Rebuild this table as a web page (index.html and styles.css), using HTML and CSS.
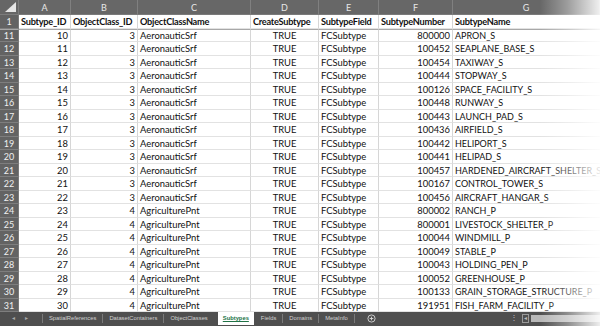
FILE: index.html
```html
<!DOCTYPE html>
<html>
<head>
<meta charset="utf-8">
<link rel="stylesheet" href="styles.css">
</head>
<body>
<div class="window">
  <div class="sheet">
    <div class="corner"><span class="tri"></span></div>
    <div class="colh">A</div><div class="colh">B</div><div class="colh">C</div><div class="colh">D</div><div class="colh">E</div><div class="colh">F</div><div class="colh">G</div>

    <div class="rowh">1</div><div class="c b">Subtype_ID</div><div class="c b">ObjectClass_ID</div><div class="c b">ObjectClassName</div><div class="c b">CreateSubtype</div><div class="c b">SubtypeField</div><div class="c b">SubtypeNumber</div><div class="c b last">SubtypeName</div>

    <div class="rowh fz">11</div><div class="c r fz">10</div><div class="c r fz">3</div><div class="c fz">AeronauticSrf</div><div class="c ctr fz">TRUE</div><div class="c fz">FCSubtype</div><div class="c r fz">800000</div><div class="c last fz">APRON_S</div>
    <div class="rowh">12</div><div class="c r">11</div><div class="c r">3</div><div class="c">AeronauticSrf</div><div class="c ctr">TRUE</div><div class="c">FCSubtype</div><div class="c r">100452</div><div class="c last">SEAPLANE_BASE_S</div>
    <div class="rowh">13</div><div class="c r">12</div><div class="c r">3</div><div class="c">AeronauticSrf</div><div class="c ctr">TRUE</div><div class="c">FCSubtype</div><div class="c r">100454</div><div class="c last">TAXIWAY_S</div>
    <div class="rowh">14</div><div class="c r">13</div><div class="c r">3</div><div class="c">AeronauticSrf</div><div class="c ctr">TRUE</div><div class="c">FCSubtype</div><div class="c r">100444</div><div class="c last">STOPWAY_S</div>
    <div class="rowh">15</div><div class="c r">14</div><div class="c r">3</div><div class="c">AeronauticSrf</div><div class="c ctr">TRUE</div><div class="c">FCSubtype</div><div class="c r">100126</div><div class="c last">SPACE_FACILITY_S</div>
    <div class="rowh">16</div><div class="c r">15</div><div class="c r">3</div><div class="c">AeronauticSrf</div><div class="c ctr">TRUE</div><div class="c">FCSubtype</div><div class="c r">100448</div><div class="c last">RUNWAY_S</div>
    <div class="rowh">17</div><div class="c r">16</div><div class="c r">3</div><div class="c">AeronauticSrf</div><div class="c ctr">TRUE</div><div class="c">FCSubtype</div><div class="c r">100443</div><div class="c last">LAUNCH_PAD_S</div>
    <div class="rowh">18</div><div class="c r">17</div><div class="c r">3</div><div class="c">AeronauticSrf</div><div class="c ctr">TRUE</div><div class="c">FCSubtype</div><div class="c r">100436</div><div class="c last">AIRFIELD_S</div>
    <div class="rowh">19</div><div class="c r">18</div><div class="c r">3</div><div class="c">AeronauticSrf</div><div class="c ctr">TRUE</div><div class="c">FCSubtype</div><div class="c r">100442</div><div class="c last">HELIPORT_S</div>
    <div class="rowh">20</div><div class="c r">19</div><div class="c r">3</div><div class="c">AeronauticSrf</div><div class="c ctr">TRUE</div><div class="c">FCSubtype</div><div class="c r">100441</div><div class="c last">HELIPAD_S</div>
    <div class="rowh">21</div><div class="c r">20</div><div class="c r">3</div><div class="c">AeronauticSrf</div><div class="c ctr">TRUE</div><div class="c">FCSubtype</div><div class="c r">100457</div><div class="c last">HARDENED_AIRCRAFT_SHELTER_S</div>
    <div class="rowh">22</div><div class="c r">21</div><div class="c r">3</div><div class="c">AeronauticSrf</div><div class="c ctr">TRUE</div><div class="c">FCSubtype</div><div class="c r">100167</div><div class="c last">CONTROL_TOWER_S</div>
    <div class="rowh">23</div><div class="c r">22</div><div class="c r">3</div><div class="c">AeronauticSrf</div><div class="c ctr">TRUE</div><div class="c">FCSubtype</div><div class="c r">100456</div><div class="c last">AIRCRAFT_HANGAR_S</div>
    <div class="rowh">24</div><div class="c r">23</div><div class="c r">4</div><div class="c">AgriculturePnt</div><div class="c ctr">TRUE</div><div class="c">FCSubtype</div><div class="c r">800002</div><div class="c last">RANCH_P</div>
    <div class="rowh">25</div><div class="c r">24</div><div class="c r">4</div><div class="c">AgriculturePnt</div><div class="c ctr">TRUE</div><div class="c">FCSubtype</div><div class="c r">800001</div><div class="c last">LIVESTOCK_SHELTER_P</div>
    <div class="rowh">26</div><div class="c r">25</div><div class="c r">4</div><div class="c">AgriculturePnt</div><div class="c ctr">TRUE</div><div class="c">FCSubtype</div><div class="c r">100044</div><div class="c last">WINDMILL_P</div>
    <div class="rowh">27</div><div class="c r">26</div><div class="c r">4</div><div class="c">AgriculturePnt</div><div class="c ctr">TRUE</div><div class="c">FCSubtype</div><div class="c r">100049</div><div class="c last">STABLE_P</div>
    <div class="rowh">28</div><div class="c r">27</div><div class="c r">4</div><div class="c">AgriculturePnt</div><div class="c ctr">TRUE</div><div class="c">FCSubtype</div><div class="c r">100043</div><div class="c last">HOLDING_PEN_P</div>
    <div class="rowh">29</div><div class="c r">28</div><div class="c r">4</div><div class="c">AgriculturePnt</div><div class="c ctr">TRUE</div><div class="c">FCSubtype</div><div class="c r">100052</div><div class="c last">GREENHOUSE_P</div>
    <div class="rowh">30</div><div class="c r">29</div><div class="c r">4</div><div class="c">AgriculturePnt</div><div class="c ctr">TRUE</div><div class="c">FCSubtype</div><div class="c r">100133</div><div class="c last">GRAIN_STORAGE_STRUCTURE_P</div>
    <div class="rowh">31</div><div class="c r">30</div><div class="c r">4</div><div class="c">AgriculturePnt</div><div class="c ctr">TRUE</div><div class="c">FCSubtype</div><div class="c r">191951</div><div class="c last">FISH_FARM_FACILITY_P</div>
  </div>

  <div class="tabbar">
    <div class="nav"><span>&#9666;</span><span>&#9656;</span></div>
    <div class="sep"></div>
    <div class="tab">SpatialReferences</div>
    <div class="sep"></div>
    <div class="tab">DatasetContainers</div>
    <div class="sep"></div>
    <div class="tab">ObjectClasses</div>
    <div class="tab active">Subtypes</div>
    <div class="tab">Fields</div>
    <div class="sep"></div>
    <div class="tab">Domains</div>
    <div class="sep"></div>
    <div class="tab">MetaInfo</div>
    <div class="sep"></div>
    <div class="add">
      <svg width="9" height="9" viewBox="0 0 10 10"><circle cx="5" cy="5" r="4" fill="none" stroke="#d8d8d8" stroke-width="1"/><path d="M5 3v4M3 5h4" stroke="#d8d8d8" stroke-width="1"/></svg>
    </div>
    <div class="spacer"></div>
    <div class="grip">&#8942;</div>
    <div class="hscroll"><span class="arrow">&#9666;</span><span class="track"></span></div>
  </div>
  <div class="fade"></div>
</div>
</body>
</html>
```

FILE: styles.css
```css
html, body {
  margin: 0;
  padding: 0;
  background: #ffffff;
  overflow: hidden;
}

.window {
  position: relative;
  width: 600px;
  height: 326px;
  overflow: hidden;
  font-family: Lato, "Liberation Sans", sans-serif;
}

.sheet {
  display: grid;
  grid-template-columns: 19px 52px 67px 113px 68px 60px 74px 147px;
  grid-template-rows: 15px repeat(22, 13.5px);
  background: #ffffff;
}

.corner {
  position: relative;
  background: #666666;
  border-right: 1px solid #7c7c7c;
  border-bottom: 1px solid #7c7c7c;
  box-sizing: border-box;
}

.tri {
  position: absolute;
  right: 2px;
  bottom: 2px;
  width: 0;
  height: 0;
  border-left: 11px solid transparent;
  border-bottom: 10px solid #e6e6e6;
}

.colh {
  background: #676767;
  color: #e8e8e8;
  font-size: 9px;
  text-align: center;
  line-height: 15px;
  border-right: 1px solid #808080;
  border-bottom: 1px solid #7a7a7a;
  box-sizing: border-box;
}

.rowh {
  background: #636363;
  color: #f0f0f0;
  font-size: 9px;
  text-align: center;
  line-height: 13px;
  border-right: 1px solid #7a7a7a;
  border-bottom: 1px solid #7e7e7e;
  box-sizing: border-box;
}

.c {
  font-size: 9.4px;
  color: #111111;
  line-height: 13px;
  padding: 0 2px;
  white-space: nowrap;
  border-right: 1px solid #d6d6d6;
  border-bottom: 1px solid #e2e2e2;
  box-sizing: border-box;
  overflow: hidden;
}

.c.last {
  border-right: none;
  overflow: visible;
  font-size: 9px;
}

.b {
  font-weight: bold;
  font-size: 9.2px;
  letter-spacing: -0.25px;
  padding: 0 1px 0 2px;
}

.c.b.last {
  font-size: 9.2px;
}

.r {
  text-align: right;
}

.ctr {
  text-align: center;
}

.fz {
  border-top: 1px solid #a8a8a8;
  line-height: 12px;
}

.tabbar {
  display: flex;
  align-items: stretch;
  height: 14px;
  margin-top: -1px;
  background: #4f4f4f;
  border-top: 1px solid #6a6a6a;
  color: #d2d2d2;
  font-family: "Liberation Sans", sans-serif;
  font-size: 5.8px;
  line-height: 12px;
}

.nav {
  display: flex;
  gap: 10px;
  padding: 0 14px 0 12px;
  font-size: 6px;
  color: #a8a8a8;
}

.sep {
  width: 1px;
  margin: 2px 0 3px;
  background: #7a7a7a;
}

.tab {
  padding: 0 6px;
  white-space: nowrap;
}

.tab.active {
  background: #ffffff;
  color: #217346;
  font-weight: bold;
  margin: 0 1px 1px 4px;
  padding: 0 5px;
  text-decoration: underline;
  text-decoration-thickness: 1px;
  text-underline-offset: 1px;
}

.add {
  display: flex;
  align-items: center;
  padding: 0 9px 1px 12px;
}

.spacer {
  flex: 1;
}

.grip {
  padding: 0 4px;
  color: #bdbdbd;
  font-size: 8px;
}

.hscroll {
  display: flex;
  align-items: center;
  width: 78px;
  gap: 2px;
  padding-bottom: 1px;
}

.arrow {
  font-size: 6px;
  color: #bbbbbb;
  border: 1px solid #9a9a9a;
  height: 7px;
  line-height: 7px;
  width: 5px;
  text-align: center;
}

.track {
  flex: 1;
  height: 7px;
  background: #b8b8b8;
}

.fade {
  position: absolute;
  top: 0;
  right: 0;
  width: 60px;
  height: 326px;
  background: linear-gradient(to right, rgba(255,255,255,0) 0%, rgba(255,255,255,0.35) 45%, rgba(255,255,255,0.9) 100%);
  pointer-events: none;
}
```
